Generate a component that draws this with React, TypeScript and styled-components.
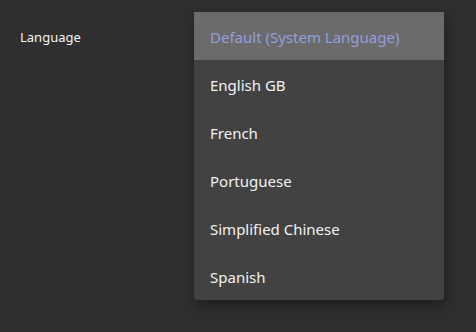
import React, { useState } from "react";
import styled, { createGlobalStyle } from "styled-components";

const GlobalStyle = createGlobalStyle`
  html, body {
    margin: 0;
    padding: 0;
    background: #2f2f2f;
    height: 100%;
  }
  #root {
    height: 100%;
  }
`;

const Page = styled.div`
  height: 332px;
  background: #2f2f2f;
  font-family: "Noto Sans", "Open Sans", sans-serif;
  color: #f2f2f2;
`;

const SettingRow = styled.div`
  display: flex;
  align-items: flex-start;
  padding: 12px 32px 0 20px;
`;

const Label = styled.div`
  flex: 1;
  height: 48px;
  padding-top: 2px;
  box-sizing: border-box;
  display: flex;
  align-items: center;
  font-size: 13px;
  color: #f4f4f4;
`;

const SelectWrap = styled.div`
  position: relative;
  width: 250px;
  height: 48px;
`;

const Menu = styled.ul`
  position: absolute;
  top: 0;
  left: 0;
  right: 0;
  margin: 0;
  padding: 0;
  list-style: none;
  background: #424242;
  border-radius: 0 0 3px 3px;
  box-shadow: 2px 6px 14px rgba(0, 0, 0, 0.35);
  overflow: hidden;
  z-index: 10;
`;

const Option = styled.li<{ $selected?: boolean }>`
  height: 48px;
  box-sizing: border-box;
  padding: 2px 0 0 16px;
  display: flex;
  align-items: center;
  font-size: 15px;
  background: ${(p) => (p.$selected ? "#6b6b6b" : "transparent")};
  color: ${(p) => (p.$selected ? "#949fdc" : "#f2f2f2")};
  cursor: pointer;
`;

const languages = [
  "Default (System Language)",
  "English GB",
  "French",
  "Portuguese",
  "Simplified Chinese",
  "Spanish",
];

export default function App() {
  const [selected, setSelected] = useState(0);
  return (
    <Page>
      <GlobalStyle />
      <SettingRow>
        <Label>Language</Label>
        <SelectWrap>
          <Menu>
            {languages.map((lang, i) => (
              <Option key={lang} $selected={i === selected} onClick={() => setSelected(i)}>
                {lang}
              </Option>
            ))}
          </Menu>
        </SelectWrap>
      </SettingRow>
    </Page>
  );
}
